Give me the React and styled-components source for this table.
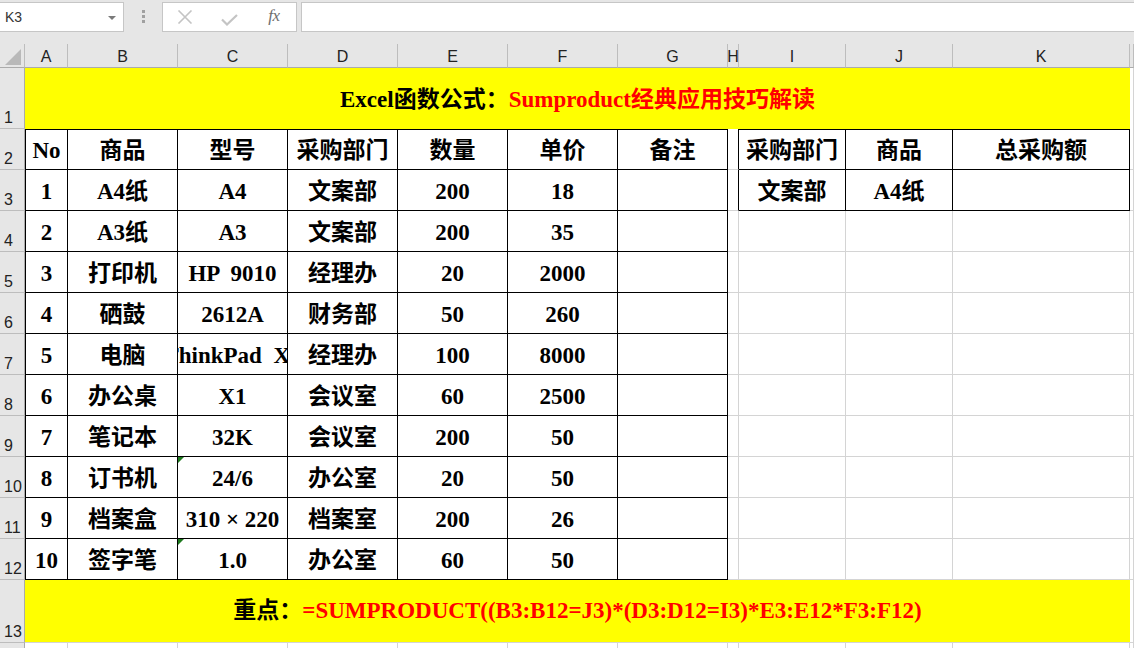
import React from "react";
import styled, { createGlobalStyle } from "styled-components";

const GlobalStyle = createGlobalStyle`
  html, body { margin: 0; padding: 0; background: #ffffff; overflow: hidden; }
  * { box-sizing: border-box; }
`;

const GRID = "#d4d4d4";
const HEAD_LINE = "#bdbdbd";
const HEAD_BG = "#e6e6e6";
const YELLOW = "#ffff00";
const RED = "#ff0000";

const Screen = styled.div`
  width: 1134px;
  height: 648px;
  overflow: hidden;
  display: flex;
  flex-direction: column;
  background: #fff;
`;

const FormulaBar = styled.div`
  height: 44px;
  flex: none;
  background: ${HEAD_BG};
  display: flex;
  align-items: flex-start;
  padding-top: 2px;
`;

const NameBox = styled.div`
  width: 124px;
  height: 30px;
  background: #fff;
  border: 1px solid #c6c6c6;
  border-left: none;
  display: flex;
  align-items: center;
  justify-content: space-between;
  padding: 0 7px 0 5px;
  font-family: "Liberation Sans", "Noto Sans", sans-serif;
  font-size: 14px;
  color: #333;
`;

const DropArrow = styled.span`
  width: 0;
  height: 0;
  border-left: 4px solid transparent;
  border-right: 4px solid transparent;
  border-top: 4px solid #7a7a7a;
  margin-top: 1px;
`;

const Grip = styled.div`
  width: 3px;
  margin: 8px 17px 0 18px;
  display: flex;
  flex-direction: column;
  gap: 2px;
`;

const GripDot = styled.span`
  width: 3px;
  height: 3px;
  background: #a0a0a0;
`;

const FxBox = styled.div`
  width: 135px;
  height: 30px;
  background: #fff;
  border: 1px solid #c6c6c6;
  display: grid;
  grid-template-columns: repeat(3, 1fr);
  align-items: center;
  justify-items: center;
`;

const FxText = styled.span`
  font-family: "Liberation Serif", serif;
  font-style: italic;
  font-size: 17px;
  color: #6e6e6e;
  letter-spacing: -0.5px;
  margin-top: -2px;
`;

const FormulaInput = styled.div`
  flex: 1;
  height: 30px;
  margin-left: 4px;
  margin-right: -2px;
  background: #fff;
  border: 1px solid #c6c6c6;
`;

const Sheet = styled.div`
  flex: 1;
  display: grid;
  grid-template-columns: 25px 43px repeat(6, 110px) 11px 107px 107px 177px 1fr;
  grid-template-rows: 24px 61px repeat(11, 41px) 63px 41px;
`;

const Corner = styled.div`
  background: ${HEAD_BG};
  border-right: 1px solid ${HEAD_LINE};
  border-bottom: 1px solid #ababab;
  display: flex;
  align-items: flex-end;
  justify-content: flex-end;
  padding: 0 3px 2px 0;
`;

const ColHead = styled.div`
  background: ${HEAD_BG};
  border-right: 1px solid ${HEAD_LINE};
  border-bottom: 1px solid #ababab;
  font-family: "Liberation Sans", "Noto Sans", sans-serif;
  font-size: 16px;
  color: #222;
  display: flex;
  align-items: center;
  justify-content: center;
  padding-top: 3px;
  overflow: hidden;
`;

const RowHead = styled.div`
  background: ${HEAD_BG};
  border-right: 1px solid #ababab;
  border-bottom: 1px solid ${HEAD_LINE};
  font-family: "Liberation Sans", "Noto Sans", sans-serif;
  font-size: 16px;
  line-height: 18px;
  color: #222;
  display: flex;
  align-items: flex-end;
  padding: 0 0 1px 4px;
`;

const lineColor = (v) => (v === "black" ? "#000" : v === "none" ? "transparent" : GRID);

const Cell = styled.div`
  position: relative;
  background: #fff;
  border-right: 1px solid ${(p) => lineColor(p.$r)};
  border-bottom: ${(p) => (p.$b === "none" ? "none" : `1px solid ${lineColor(p.$b)}`)};
  border-top: ${(p) => (p.$t ? "1px solid #000" : "none")};
  border-left: ${(p) => (p.$l ? "1px solid #000" : "none")};
  font-family: "Liberation Serif", "Noto Sans CJK SC", serif;
  font-weight: bold;
  font-size: 23px;
  line-height: 26px;
  color: #000;
  display: flex;
  align-items: center;
  justify-content: center;
  white-space: pre;
  overflow: hidden;
  padding-top: 3px;
`;

const Banner = styled.div`
  grid-column: span 11;
  background: ${YELLOW};
  border-bottom: ${(p) => (p.$bottom ? `1px solid ${GRID}` : "none")};
  font-family: "Liberation Serif", "Noto Sans CJK SC", serif;
  font-weight: bold;
  font-size: 23px;
  line-height: 26px;
  color: #000;
  display: flex;
  align-items: center;
  justify-content: center;
  white-space: pre;
  padding-top: ${(p) => (p.$bottom ? "0" : "2px")};
`;

const Red = styled.span`
  color: ${RED};
`;

const TextMark = styled.span`
  position: absolute;
  left: 0;
  top: 0;
  width: 0;
  height: 0;
  border-top: 6px solid #1e7a1e;
  border-right: 6px solid transparent;
`;

const LETTERS = ["A", "B", "C", "D", "E", "F", "G", "H", "I", "J", "K", ""];

const MAIN = [
  ["No", "商品", "型号", "采购部门", "数量", "单价", "备注"],
  ["1", "A4纸", "A4", "文案部", "200", "18", ""],
  ["2", "A3纸", "A3", "文案部", "200", "35", ""],
  ["3", "打印机", "HP  9010", "经理办", "20", "2000", ""],
  ["4", "硒鼓", "2612A", "财务部", "50", "260", ""],
  ["5", "电脑", "ThinkPad  X1", "经理办", "100", "8000", ""],
  ["6", "办公桌", "X1", "会议室", "60", "2500", ""],
  ["7", "笔记本", "32K", "会议室", "200", "50", ""],
  ["8", "订书机", "24/6", "办公室", "20", "50", ""],
  ["9", "档案盒", "310 × 220", "档案室", "200", "26", ""],
  ["10", "签字笔", "1.0", "办公室", "60", "50", ""],
];

const SIDE = [
  ["采购部门", "商品", "总采购额"],
  ["文案部", "A4纸", ""],
];

const TEXT_FLAG = { "8-2": true, "10-2": true };

function DataRow({ index }) {
  const rowNo = index + 2;
  const main = MAIN[index];
  const side = SIDE[index];
  const isHead = index === 0;
  return (
    <>
      <RowHead>{rowNo}</RowHead>
      {main.map((v, c) => (
        <Cell key={c} $t={isHead} $l={c === 0} $r="black" $b="black">
          {TEXT_FLAG[`${index}-${c}`] && <TextMark />}
          {v}
        </Cell>
      ))}
      <Cell $r={side ? "black" : "grid"} $b="grid" />
      {side
        ? side.map((v, c) => (
            <Cell key={`s${c}`} $t={isHead} $r="black" $b="black">
              {v}
            </Cell>
          ))
        : [0, 1, 2].map((c) => <Cell key={`s${c}`} $r="grid" $b="grid" />)}
      <Cell $r="grid" $b="grid" />
    </>
  );
}

export default function App() {
  return (
    <>
      <GlobalStyle />
      <Screen>
        <FormulaBar>
          <NameBox>
            <span>K3</span>
            <DropArrow />
          </NameBox>
          <Grip>
            <GripDot />
            <GripDot />
            <GripDot />
          </Grip>
          <FxBox>
            <svg width="16" height="14" viewBox="0 0 16 14">
              <path d="M1.5 0.5 L14.5 13.5 M14.5 0.5 L1.5 13.5" stroke="#c4c4c4" strokeWidth="1.6" fill="none" />
            </svg>
            <svg width="17" height="12" viewBox="0 0 17 12" style={{ marginTop: 5 }}>
              <path d="M1 5.5 L6 10.5 L16 1" stroke="#c4c4c4" strokeWidth="2.2" fill="none" />
            </svg>
            <FxText>fx</FxText>
          </FxBox>
          <FormulaInput />
        </FormulaBar>
        <Sheet>
          <Corner>
            <svg width="16" height="16" viewBox="0 0 16 16">
              <polygon points="16,0 16,16 0,16" fill="#b9b9b9" />
            </svg>
          </Corner>
          {LETTERS.map((l, i) => (
            <ColHead key={i}>{l}</ColHead>
          ))}

          <RowHead>1</RowHead>
          <Banner>
            Excel函数公式：<Red>Sumproduct经典应用技巧解读</Red>
          </Banner>
          <Cell $r="grid" $b="none" />

          {MAIN.map((_, i) => (
            <DataRow key={i} index={i} />
          ))}

          <RowHead>13</RowHead>
          <Banner $bottom>
            重点：<Red>=SUMPRODUCT((B3:B12=J3)*(D3:D12=I3)*E3:E12*F3:F12)</Red>
          </Banner>
          <Cell $r="grid" $b="grid" />

          <RowHead />
          {LETTERS.map((_, i) => (
            <Cell key={i} $r="grid" $b="grid" />
          ))}
        </Sheet>
      </Screen>
    </>
  );
}
